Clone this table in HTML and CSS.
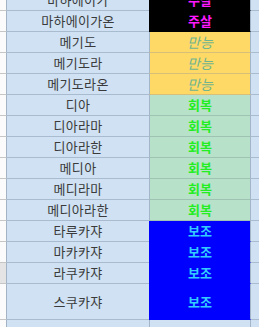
FILE: index.html
```html
<!DOCTYPE html>
<html lang="ko">
<head>
<meta charset="utf-8">
<link rel="stylesheet" href="styles.css">
</head>
<body>
<div class="sheet">
  <div class="row"><div class="hd"></div><div class="name">마하에이가</div><div class="type black">주살</div><div class="tail"></div></div>
  <div class="row"><div class="hd"></div><div class="name">마하에이가온</div><div class="type black">주살</div><div class="tail"></div></div>
  <div class="row"><div class="hd"></div><div class="name">메기도</div><div class="type yellow">만능</div><div class="tail"></div></div>
  <div class="row"><div class="hd"></div><div class="name">메기도라</div><div class="type yellow">만능</div><div class="tail"></div></div>
  <div class="row"><div class="hd"></div><div class="name">메기도라온</div><div class="type yellow">만능</div><div class="tail"></div></div>
  <div class="row"><div class="hd"></div><div class="name">디아</div><div class="type green">회복</div><div class="tail"></div></div>
  <div class="row"><div class="hd"></div><div class="name">디아라마</div><div class="type green">회복</div><div class="tail"></div></div>
  <div class="row"><div class="hd"></div><div class="name">디아라한</div><div class="type green">회복</div><div class="tail"></div></div>
  <div class="row"><div class="hd"></div><div class="name">메디아</div><div class="type green">회복</div><div class="tail"></div></div>
  <div class="row"><div class="hd"></div><div class="name">메디라마</div><div class="type green">회복</div><div class="tail"></div></div>
  <div class="row"><div class="hd"></div><div class="name">메디아라한</div><div class="type green">회복</div><div class="tail"></div></div>
  <div class="row"><div class="hd"></div><div class="name">타루카쟈</div><div class="type blue">보조</div><div class="tail"></div></div>
  <div class="row"><div class="hd"></div><div class="name">마카카쟈</div><div class="type blue">보조</div><div class="tail"></div></div>
  <div class="row"><div class="hd sel"></div><div class="name">라쿠카쟈</div><div class="type blue">보조</div><div class="tail"></div></div>
  <div class="row tall"><div class="hd"></div><div class="name">스쿠카쟈</div><div class="type blue">보조</div><div class="tail"></div></div>
  <div class="row"><div class="hd"></div><div class="name"></div><div class="type"></div><div class="tail"></div></div>
</div>
</body>
</html>
```

FILE: styles.css
```css
html, body {
  margin: 0;
  padding: 0;
  background: #ffffff;
}
.sheet {
  margin-top: -10px;
  font-family: "Noto Sans CJK KR", "Noto Sans", sans-serif;
  font-size: 13px;
}
.row {
  display: flex;
  height: 21px;
}
.row.tall {
  height: 36px;
}
.row > div {
  box-sizing: border-box;
  border-bottom: 1px solid #a9bbce;
  display: flex;
  align-items: center;
  justify-content: center;
  line-height: 20px;
}
.hd {
  width: 7px;
  flex: none;
  background: #fbfbfb;
  border-right: 1px solid #a3b3c4;
  border-bottom-color: #c6c6c6 !important;
}
.hd.sel {
  background: #e4e4e4;
}
.name {
  width: 142px;
  flex: none;
  background: #cfe1f3;
  color: #3a3a3a;
  letter-spacing: 0.3px;
}
.type {
  width: 102px;
  flex: none;
  background: #cfe1f3;
  border-left: 1px solid #a3b5c8;
  border-right: 1px solid #a3b5c8;
  border-bottom-color: #a9bbce;
}
.tail {
  flex: 1;
  background: #cfe1f3;
}
.black {
  background: #000000;
  border-left-color: #000000;
  border-bottom-color: #000000 !important;
  color: #ff19ff;
  font-weight: bold;
}
.yellow {
  background: #ffd966;
  border-bottom-color: #d6bf78 !important;
  color: #70b48f;
  font-style: italic;
  font-size: 14px;
}
.green {
  background: #b7e1c9;
  border-bottom-color: #9ec3b3 !important;
  color: #22ee22;
  font-weight: bold;
}
.blue {
  background: #0000ff;
  border-left-color: #0000ff;
  border-bottom-color: #0000ff !important;
  color: #33ccff;
  font-weight: bold;
}
```
